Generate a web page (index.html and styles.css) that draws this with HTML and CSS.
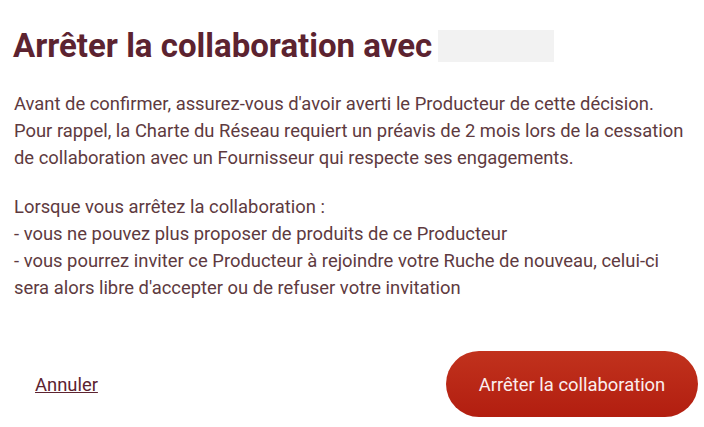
FILE: index.html
```html
<!DOCTYPE html>
<html lang="fr">

<head>
    <meta charset="UTF-8">
    <meta name="viewport" content="width=device-width, initial-scale=1.0">
    <title>Arrêter la collaboration</title>
    <link rel="stylesheet" href="styles.css">
</head>

<body>
    <div class="dialog">
        <h1 class="dialog-title">Arrêter la collaboration avec <span class="name-placeholder"></span></h1>

        <div class="dialog-body">
            <p>Avant de confirmer, assurez-vous d'avoir averti le Producteur de cette décision.<br>
                Pour rappel, la Charte du Réseau requiert un préavis de 2 mois lors de la cessation de collaboration avec un Fournisseur qui respecte ses engagements.</p>
            <p>Lorsque vous arrêtez la collaboration :<br>
                - vous ne pouvez plus proposer de produits de ce Producteur<br>
                - vous pourrez inviter ce Producteur à rejoindre votre Ruche de nouveau, celui-ci sera alors libre d'accepter ou de refuser votre invitation</p>
        </div>

        <div class="dialog-actions">
            <a href="#" class="cancel-link">Annuler</a>
            <button class="stop-button">Arrêter la collaboration</button>
        </div>
    </div>
</body>

</html>
```

FILE: styles.css
```css
/* Reset styles */

* {
    margin: 0;
    padding: 0;
    box-sizing: border-box;
}

body {
    font-family: Roboto, "Liberation Sans", Arial, sans-serif;
    background-color: #fff;
    color: #5e3a40;
}

/* Dialog */

.dialog {
    padding: 28px 14px 0 13px;
}

.dialog-title {
    font-size: 33px;
    font-weight: bold;
    color: #5c2330;
    line-height: 36px;
    display: flex;
    align-items: center;
}

.name-placeholder {
    display: inline-block;
    width: 116px;
    height: 32px;
    margin-left: 6px;
    background-color: #f2f2f2;
}

.dialog-body {
    margin-top: 26px;
    padding-left: 1px;
    font-size: 18.4px;
    line-height: 27px;
}

.dialog-body p + p {
    margin-top: 22px;
}

/* Actions */

.dialog-actions {
    display: flex;
    justify-content: space-between;
    align-items: center;
    margin-top: 50px;
    padding-left: 22px;
}

.cancel-link {
    color: #5c2330;
    font-size: 18.4px;
}

.stop-button {
    width: 252px;
    height: 66px;
    border: none;
    border-radius: 33px;
    background: linear-gradient(#c1321d, #b21e10);
    color: #fbeeee;
    font-family: inherit;
    font-size: 18.4px;
    cursor: pointer;
    margin-right: -8px;
}
```
